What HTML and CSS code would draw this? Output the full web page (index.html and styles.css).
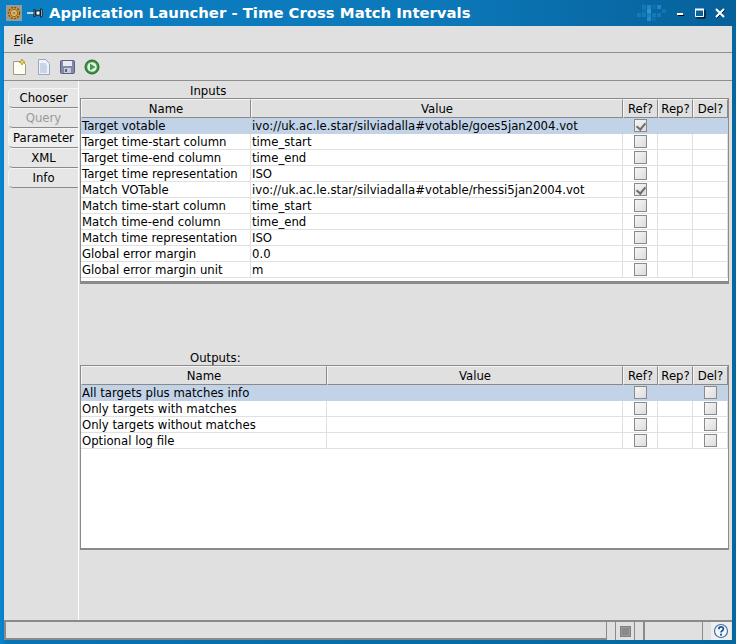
FILE: index.html
```html
<!DOCTYPE html>
<html lang="en">
<head>
<meta charset="utf-8">
<title>Application Launcher - Time Cross Match Intervals</title>
<link rel="stylesheet" href="styles.css">
</head>
<body>
<div class="window">
  <header class="titlebar">
    <span class="app-icon"><svg width="16" height="16" viewBox="0 0 16 16"><circle cx="8" cy="8" r="5.500" fill="#e0a030" stroke="#7a5010" stroke-width="1.400" stroke-dasharray="2 1.200"/><circle cx="8" cy="8" r="3.600" fill="#f0c060" stroke="#8a6020"/><circle cx="8" cy="8" r="1.600" fill="#8a8a80"/></svg></span>
    <span class="pin"><svg width="16" height="10" viewBox="0 0 16 10"><path d="M0 5h7" stroke="#fff" stroke-width="1.400"/><path d="M7 1.500h1v7H7zM9 3h4v4H9zM13.500 1h1.500v8h-1.500z" fill="#fff" stroke="#000" stroke-width=".8"/></svg></span>
    <h1 class="title">Application Launcher - Time Cross Match Intervals</h1>
    <span class="controls">
      <svg class="checker" width="29" height="24" viewBox="0 0 29 24"><g fill="#2a96d6" fill-opacity=".4"><rect x="0" y="12" width="4" height="4"/><rect x="5" y="4" width="4" height="4"/><rect x="5" y="12" width="4" height="4"/><rect x="5" y="8" width="4" height="4" fill-opacity=".2"/><rect x="10" y="8" width="4" height="4" fill-opacity="1"/><rect x="10" y="4" width="4" height="4" fill-opacity=".7"/><rect x="10" y="12" width="4" height="4" fill-opacity=".6"/><rect x="10" y="16" width="4" height="4" fill-opacity=".8"/><rect x="15" y="12" width="4" height="4"/><rect x="15" y="4" width="4" height="4" fill-opacity=".2"/><rect x="20" y="4" width="4" height="4" fill-opacity=".7"/><rect x="20" y="12" width="4" height="4"/><rect x="25" y="8" width="4" height="4" fill-opacity=".3"/><rect x="15" y="16" width="4" height="4" fill-opacity=".2"/></g></svg>
      <svg class="ctl" width="12" height="12" viewBox="0 0 12 12"><path d="M3 6h6v2H3z" fill="#fff"/><path d="M4 8.500h6" stroke="#000" stroke-width="1"/></svg>
      <svg class="ctl" width="12" height="12" viewBox="0 0 12 12"><path d="M1.500 2.500h8v7h-8z" fill="none" stroke="#fff" stroke-width="1"/><path d="M1 2.500h9" stroke="#fff" stroke-width="2"/><path d="M11 3v8H2.500" fill="none" stroke="#000" stroke-width="1"/></svg>
      <svg class="ctl" width="12" height="12" viewBox="0 0 12 12"><path d="M3 11l8-8" stroke="#000" stroke-width="1" fill="none"/><path d="M2 2l8 8M10 2l-8 8" stroke="#fff" stroke-width="2" fill="none"/></svg>
    </span>
  </header>
  <div class="client">
    <nav class="menubar"><span class="menu-item"><u>F</u>ile</span></nav>
    <div class="toolbar">
      <svg class="tool" width="18" height="18" viewBox="0 0 18 18"><path d="M2.500 3.500h9l3 3v10h-12z" fill="#fdfdf4" stroke="#a09a80"/><path d="M11 1l1 2 2 1-2 1-1 2-1-2-2-1 2-1z" fill="#f3d64a" stroke="#a08820" stroke-width=".7"/></svg>
      <svg class="tool" width="18" height="18" viewBox="0 0 18 18"><path d="M3.500 1.500h7l4 4v11h-11z" fill="#eef2fa" stroke="#9aa6bc"/><path d="M5 6h6M5 8h7M5 10h7M5 12h7M5 14h7" stroke="#a4b6d6"/></svg>
      <svg class="tool" width="18" height="18" viewBox="0 0 18 18"><rect x="1.500" y="2.500" width="14" height="13" rx="1" fill="#8288aa" stroke="#5a6084"/><rect x="4" y="3" width="9" height="5" fill="#e8eaf0"/><rect x="5" y="10" width="7" height="5" fill="#c8ccd8"/><rect x="6" y="11" width="2" height="3" fill="#5b6288"/></svg>
      <svg class="tool" width="18" height="18" viewBox="0 0 18 18"><circle cx="9" cy="9" r="7" fill="#3b8f42" stroke="#1f6a2a"/><circle cx="9" cy="9" r="4.800" fill="#e4f2df"/><path d="M7 5.500l5.500 3.500-5.500 3.500z" fill="#3fa048"/></svg>
    </div>
    <main class="main">
      <aside class="tabs">
        <button class="tab">Chooser</button>
        <button class="tab tab-disabled">Query</button>
        <button class="tab tab-active">Parameter</button>
        <button class="tab">XML</button>
        <button class="tab">Info</button>
      </aside>
      <section class="panels">
        <div class="group group-inputs">
          <div class="label label-inputs">Inputs</div>
          <div class="tbl tbl-inputs">
            <div class="row head"><span>Name</span><span>Value</span><span>Ref?</span><span>Rep?</span><span>Del?</span></div>
            <div class="row sel"><span>Target votable</span><span>ivo://uk.ac.le.star/silviadalla#votable/goes5jan2004.vot</span><span><i class="cb on"></i></span><span></span><span></span></div>
            <div class="row"><span>Target time-start column</span><span>time_start</span><span><i class="cb"></i></span><span></span><span></span></div>
            <div class="row"><span>Target time-end column</span><span>time_end</span><span><i class="cb"></i></span><span></span><span></span></div>
            <div class="row"><span>Target time representation</span><span>ISO</span><span><i class="cb"></i></span><span></span><span></span></div>
            <div class="row"><span>Match VOTable</span><span>ivo://uk.ac.le.star/silviadalla#votable/rhessi5jan2004.vot</span><span><i class="cb on"></i></span><span></span><span></span></div>
            <div class="row"><span>Match time-start column</span><span>time_start</span><span><i class="cb"></i></span><span></span><span></span></div>
            <div class="row"><span>Match time-end column</span><span>time_end</span><span><i class="cb"></i></span><span></span><span></span></div>
            <div class="row"><span>Match time representation</span><span>ISO</span><span><i class="cb"></i></span><span></span><span></span></div>
            <div class="row"><span>Global error margin</span><span>0.0</span><span><i class="cb"></i></span><span></span><span></span></div>
            <div class="row"><span>Global error margin unit</span><span>m</span><span><i class="cb"></i></span><span></span><span></span></div>
          </div>
        </div>
        <div class="group group-outputs">
          <div class="label label-outputs">Outputs:</div>
          <div class="tbl tbl-outputs">
            <div class="row head"><span>Name</span><span>Value</span><span>Ref?</span><span>Rep?</span><span>Del?</span></div>
            <div class="row sel"><span>All targets plus matches info</span><span></span><span><i class="cb"></i></span><span></span><span><i class="cb"></i></span></div>
            <div class="row"><span>Only targets with matches</span><span></span><span><i class="cb"></i></span><span></span><span><i class="cb"></i></span></div>
            <div class="row"><span>Only targets without matches</span><span></span><span><i class="cb"></i></span><span></span><span><i class="cb"></i></span></div>
            <div class="row"><span>Optional log file</span><span></span><span><i class="cb"></i></span><span></span><span><i class="cb"></i></span></div>
          </div>
        </div>
      </section>
    </main>
    <footer class="status">
      <div class="field field-msg"></div>
      <div class="field field-stop"><i class="stop"></i></div>
      <div class="field field-prog"></div>
      <div class="help"><svg width="16" height="16" viewBox="0 0 16 16"><circle cx="8" cy="8" r="6.500" fill="#f4f8fc" stroke="#3a72b0" stroke-width="1.200"/><path d="M5.800 6.200c0-3 4.600-3 4.600-.2 0 1.800-2.400 1.800-2.400 3.600" fill="none" stroke="#1c4f8c" stroke-width="1.700"/><rect x="7.100" y="10.700" width="1.900" height="1.900" fill="#1c4f8c"/></svg></div>
    </footer>
  </div>
</div>
</body>
</html>
```
FILE: styles.css
```css
* { box-sizing: border-box; }
html, body { margin: 0; padding: 0; }
body { width: 736px; height: 644px; overflow: hidden; font-family: "DejaVu Sans", sans-serif; font-size: 11.7px; color: #000; }
.window { width: 736px; height: 644px; display: flex; flex-direction: column; padding: 0 4px 4px; background: linear-gradient(90deg, #0a86d4 0, #0874b4 1%, #06689f 100%); }
.titlebar { height: 26px; flex: none; margin: 0 -4px; padding: 0 0 0 6px; display: flex; align-items: center; background: linear-gradient(90deg, #0c7fc4 0, #0c78b8 60%, #06609a 100%); }
.app-icon { width: 16px; height: 16px; display: block; background: #9a9a92; flex: none; }
.pin { width: 16px; height: 10px; margin-left: 5px; display: block; flex: none; line-height: 0; }
.title { margin: 0 0 0 6px; font-size: 14.85px; font-weight: bold; line-height: 26px; color: #fff; white-space: nowrap; flex: none; }
.controls { margin-left: auto; display: flex; align-items: center; padding-right: 10px; }
.checker { display: block; }
.ctl { display: block; margin-left: 8px; }
.client { flex: 1; min-height: 0; display: flex; flex-direction: column; background: #e0e0e0; }
.menubar { height: 27px; flex: none; padding: 6px 0 0 10px; border-bottom: 1px solid #8e8e8e; line-height: 16px; }
.toolbar { height: 28px; flex: none; padding: 5px 0 0 7px; display: flex; gap: 6px; border-bottom: 1px solid #8e8e8e; }
.tool { display: block; }
.main { flex: 1; min-height: 0; display: flex; }
.tabs { width: 75px; flex: none; padding: 7px 0 0 4px; display: flex; flex-direction: column; border-right: 1px solid #fff; }
.tab { height: 20px; width: 70px; padding: 0; border: 0; border-bottom: 1px solid #8a8a8a; border-left: 1px solid #f4f4f4; border-top: 1px solid #f4f4f4; border-radius: 5px 0 0 5px; background: #e6e6e6; font: 11.7px/18px "DejaVu Sans", sans-serif; color: #000; text-align: center; }
.tab-disabled { color: #9a9a9a; }
.tab-active { background: #eeeeee; }
.panels { flex: 1; min-width: 0; display: flex; flex-direction: column; padding-left: 1px; }
.group { display: flex; flex-direction: column; }
.group-inputs { height: 203px; }
.group-outputs { margin-top: 67px; }
.label { height: 17px; line-height: 20px; }
.label-inputs { padding-left: 110px; }
.label-outputs { padding-left: 110px; height: 14px; line-height: 14px; }
.tbl { width: 649px; background: #fff; border: 1px solid #8a8a8a; }
.tbl-inputs { height: 186px; border-bottom-width: 3px; }
.tbl-outputs { height: 185px; border-bottom-width: 2px; }
.row { display: grid; height: 16px; }
.tbl-inputs .row { grid-template-columns: 170px 372px 35px 35px 35px; }
.tbl-outputs .row { grid-template-columns: 246px 296px 35px 35px 35px; }
.row > span { display: flex; align-items: center; justify-content: center; border-right: 1px solid #e0e0e0; border-bottom: 1px solid #e0e0e0; line-height: 15px; white-space: nowrap; overflow: hidden; }
.row > span:nth-child(-n+2) { justify-content: flex-start; padding: 2px 0 0 1px; }
.row.head { height: 19px; background: #e0e0e0; }
.row.head > span { justify-content: center; padding: 0; border-right: 1px solid #8a8a8a; border-bottom: 1px solid #8a8a8a; border-left: 1px solid #f4f4f4; border-top: 1px solid #f4f4f4; line-height: 16px; }
.row.sel { background: #c2d3e8; }
.row.sel > span { border-color: #c2d3e8; }
.cb { display: block; width: 13px; height: 13px; border: 1px solid #8a8a8a; background: linear-gradient(135deg, #f6f6f6, #dcdcdc); position: relative; }
.cb.on::after { content: ""; position: absolute; left: 3px; top: 1px; width: 4px; height: 7px; border: solid #6e6e6e; border-width: 0 2px 2px 0; transform: rotate(40deg); }
.status { height: 20px; flex: none; display: flex; border-top: 2px solid #8a8a8a; margin-top: -1px; }
.field { height: 18px; border: 1px solid #8a8a8a; border-top: 0; }
.field-msg { width: 603px; border-left-width: 2px; border-bottom-width: 2px; }
.field-stop { width: 20px; margin-left: 8px; border-bottom: 0; border-left-width: 1px; display: flex; align-items: center; justify-content: center; }
.stop { display: block; width: 11px; height: 11px; background: #8a8a8a; border: 1px solid #808080; box-shadow: inset 0 0 0 1px #9a9a9a; }
.field-prog { width: 60px; margin-left: 8px; border-bottom: 0; border-left-width: 2px; }
.help { width: 20px; height: 18px; margin-left: 8px; display: flex; align-items: center; justify-content: center; background: #eeeeee; }
```
